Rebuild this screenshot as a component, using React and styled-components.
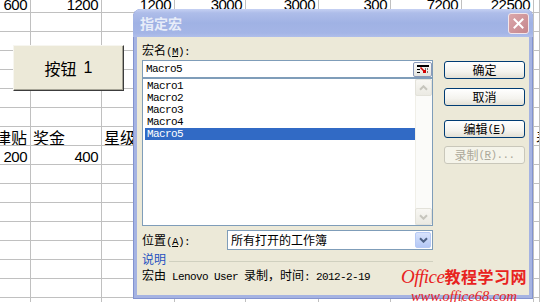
import React from "react";
import styled, { createGlobalStyle, css } from "styled-components";

const CJK = `"Noto Sans CJK SC", "Noto Sans", sans-serif`;
const MONO = `"Liberation Mono", "DejaVu Sans Mono", monospace`;

const GlobalStyle = createGlobalStyle`
  html, body { margin: 0; padding: 0; background: #ffffff; }
  body { font-family: ${CJK}; }
`;

const Screen = styled.div`
  position: relative;
  width: 540px;
  height: 302px;
  overflow: hidden;
  background: #fff;
`;

/* ---------- spreadsheet ---------- */
const Sheet = styled.div`
  display: grid;
  grid-template-columns: 31px 71px 73px 71px 73px 72px 71px 72px 1fr;
  grid-template-rows: 13px;
  grid-auto-rows: 19px;
  font-family: ${CJK};
  font-size: 16px;
  color: #000;
`;

const Cell = styled.div`
  box-sizing: border-box;
  min-width: 0;
  border-right: 1px solid #c0c0c0;
  border-bottom: 1px solid #c0c0c0;
  display: flex;
  align-items: flex-end;
  justify-content: ${(p) => (p.$right ? "flex-end" : "flex-start")};
  padding: 0 3px 0 2px;
  overflow: hidden;
  white-space: nowrap;
  line-height: 1;
`;

const Num = styled.span`
  font-family: "Liberation Sans", Arial, sans-serif;
  font-size: 15px;
  letter-spacing: -0.5px;
`;

const FormButton = styled.div`
  position: absolute;
  left: 13px;
  top: 45px;
  width: 111px;
  height: 46px;
  box-sizing: border-box;
  background: #ece9d8;
  border-top: 1px solid #f7f6f0;
  border-left: 1px solid #f7f6f0;
  border-right: 1px solid #3c3c3c;
  border-bottom: 1px solid #3c3c3c;
  box-shadow: inset -1px -1px 0 #a7a597;
  display: flex;
  align-items: center;
  justify-content: center;
  font: 16px ${CJK};
  color: #000;
`;

const FormNum = styled.span`
  margin-left: 7px;
  font-family: "Liberation Sans", Arial, sans-serif;
  font-size: 16px;
`;

/* ---------- dialog ---------- */
const Dialog = styled.div`
  position: absolute;
  left: 133px;
  top: 9px;
  width: 400px;
  height: 290px;
  box-sizing: border-box;
  display: flex;
  flex-direction: column;
  padding: 0 4px 4px;
  background: #a5b3e2;
  border-radius: 8px 8px 0 0;
  box-shadow: inset 0 0 0 1px #8393cf;
`;

const TitleBar = styled.div`
  height: 28px;
  margin: 0 -4px;
  padding: 0 4px 0 7px;
  display: flex;
  align-items: center;
  justify-content: space-between;
  border-radius: 8px 8px 0 0;
  background: linear-gradient(
    to bottom,
    #c6d1f3 0%,
    #aebde9 14%,
    #a0b2e4 50%,
    #a4b5e6 86%,
    #b0bfea 100%
  );
`;

const Title = styled.span`
  font: bold 14px ${CJK};
  color: #e8edf9;
`;

const CloseBtn = styled.div`
  width: 21px;
  height: 21px;
  box-sizing: border-box;
  border: 1px solid #f3e6ea;
  border-radius: 3px;
  background: linear-gradient(135deg, #dba7ab, #c5868c);
  display: flex;
  align-items: center;
  justify-content: center;
`;

const Client = styled.div`
  flex: 1;
  background: #ece9d8;
  display: grid;
  grid-template-columns: 291px 81px;
  column-gap: 11px;
  padding: 6px 4px 0 5px;
  align-items: start;
`;

const LeftCol = styled.div`
  display: flex;
  flex-direction: column;
`;

const Label = styled.div`
  font: 12px/14px ${CJK};
  color: #000;
  height: 14px;
  white-space: nowrap;
`;

const Lat = styled.span`
  font-family: ${MONO};
  font-size: 11px;
  letter-spacing: -0.6px;
`;

const Acc = styled.span`
  text-decoration: underline;
`;

const NameInput = styled.div`
  margin-top: 3px;
  height: 18px;
  box-sizing: border-box;
  border: 1px solid #7f9db9;
  background: #fff;
  display: flex;
  align-items: center;
  justify-content: space-between;
  padding: 0 0 0 3px;
  font-family: ${MONO};
  font-size: 11px;
  letter-spacing: -0.6px;
`;

const RefBtn = styled.div`
  width: 19px;
  height: 15px;
  box-sizing: border-box;
  border: 1px solid #8a99b8;
  border-radius: 2px;
  background: linear-gradient(#fbfbfa, #e4e4de);
  display: flex;
  align-items: center;
  justify-content: center;
`;

const ListBox = styled.div`
  height: 148px;
  box-sizing: border-box;
  border: 1px solid #7f9db9;
  background: #fff;
  display: flex;
`;

const Items = styled.div`
  flex: 1;
  padding: 1px 0 0 2px;
`;

const Item = styled.div`
  height: 12px;
  line-height: 12px;
  padding-left: 2px;
  font-family: ${MONO};
  font-size: 11px;
  letter-spacing: -0.6px;
  color: #000;
  ${(p) =>
    p.$selected &&
    css`
      background: #316ac5;
      color: #fff;
    `}
`;

const ScrollBar = styled.div`
  width: 17px;
  display: flex;
  flex-direction: column;
  justify-content: space-between;
  background: #fbfbf9;
  box-shadow: inset 1px 0 0 #f0efe8;
`;

const ScrollBtn = styled.div`
  width: 17px;
  height: 17px;
  box-sizing: border-box;
  border: 1px solid #e3e2da;
  border-radius: 2px;
  background: linear-gradient(#f8f7f3, #ebeae3);
  display: flex;
  align-items: center;
  justify-content: center;
`;

const ComboRow = styled.div`
  margin-top: 4px;
  display: grid;
  grid-template-columns: 85px 1fr;
  align-items: center;
`;

const Combo = styled.div`
  height: 20px;
  box-sizing: border-box;
  border: 1px solid #7f9db9;
  background: #fff;
  display: flex;
  align-items: center;
  justify-content: space-between;
  padding: 0 1px 0 3px;
  font: 12px/14px ${CJK};
  color: #000;
`;

const DropBtn = styled.div`
  width: 16px;
  height: 16px;
  box-sizing: border-box;
  border: 1px solid #b7caf5;
  border-radius: 2px;
  background: linear-gradient(#d8e3fc, #b4c8f6);
  display: flex;
  align-items: center;
  justify-content: center;
`;

const GroupHead = styled.div`
  margin-top: 2px;
  display: flex;
  align-items: flex-start;
  gap: 3px;
  font: 12px/14px ${CJK};
  color: #1e50c0;
  &::after {
    content: "";
    flex: 1;
    height: 1px;
    margin-top: 9px;
    background: #d0d0bf;
  }
`;

const Desc = styled.div`
  margin-top: 2px;
  font: 12px/14px ${CJK};
  color: #000;
  white-space: nowrap;
`;

const RightCol = styled.div`
  display: flex;
  flex-direction: column;
  padding-top: 18px;
`;

const Btn = styled.div`
  margin-top: ${(p) => p.$gap || 0}px;
  width: 81px;
  height: 18px;
  box-sizing: border-box;
  border: 1px solid #003c74;
  border-radius: 3px;
  background: linear-gradient(#ffffff 0%, #f4f3ee 60%, #e3e0d5 100%);
  display: flex;
  align-items: center;
  justify-content: center;
  font: 12px/14px ${CJK};
  color: #000;
  white-space: nowrap;
  ${(p) =>
    p.$disabled &&
    css`
      border-color: #c9c7ba;
      background: #f5f4ea;
      color: #aca899;
    `}
`;

const Watermark = styled.div`
  position: absolute;
  left: 268px;
  top: 255px;
  display: flex;
  flex-direction: column;
  align-items: center;
  color: #e8231e;
  pointer-events: none;
`;

const WmTop = styled.div`
  display: flex;
  align-items: baseline;
  white-space: nowrap;
  line-height: 1;
`;

const WmOffice = styled.span`
  font: italic 19px "Liberation Serif", serif;
  letter-spacing: -0.5px;
`;

const WmCn = styled.span`
  font: bold 16px ${CJK};
  letter-spacing: 0.5px;
`;

const WmUrl = styled.div`
  font: italic 14.5px/1 "Liberation Serif", serif;
  margin-top: 1px;
  white-space: nowrap;
`;

/* ---------- data ---------- */
const rows = [
  ["600", "1200", "1200", "3000", "3000", "300", "7200", "22500", ""],
  [],
  [],
  [],
  [],
  [],
  [],
  ["津贴", "奖金", "星级", "", "", "", "", "", "表"],
  ["200", "400"],
  [],
  [],
  [],
  [],
  [],
  [],
  [],
  [],
];

const macros = ["Macro1", "Macro2", "Macro3", "Macro4", "Macro5"];

const Chevron = ({ dir = "down", color, w = 9 }) => (
  <svg width={w} height="6" viewBox="0 0 9 6">
    <path
      d={dir === "down" ? "M1 1.2 L4.5 4.7 L8 1.2" : "M1 4.8 L4.5 1.3 L8 4.8"}
      stroke={color}
      strokeWidth="2"
      fill="none"
    />
  </svg>
);

export default function App() {
  return (
    <Screen>
      <GlobalStyle />
      <Sheet>
        {rows.map((row, r) =>
          Array.from({ length: 9 }).map((_, c) => {
            const v = row[c] || "";
            const isNum = /^\d+$/.test(v);
            return (
              <Cell key={`${r}-${c}`} $right={isNum || (c === 0 && v)}>
                {isNum ? <Num>{v}</Num> : v}
              </Cell>
            );
          })
        )}
      </Sheet>

      <FormButton>
        按钮<FormNum>1</FormNum>
      </FormButton>

      <Dialog>
        <TitleBar>
          <Title>指定宏</Title>
          <CloseBtn>
            <svg width="11" height="11" viewBox="0 0 11 11">
              <path
                d="M1.5 1.5 L9.5 9.5 M9.5 1.5 L1.5 9.5"
                stroke="#fff"
                strokeWidth="2"
                strokeLinecap="square"
              />
            </svg>
          </CloseBtn>
        </TitleBar>

        <Client>
          <LeftCol>
            <Label>
              宏名<Lat>
                (<Acc>M</Acc>):
              </Lat>
            </Label>
            <NameInput>
              Macro5
              <RefBtn>
                <svg width="14" height="10" viewBox="0 0 14 10">
                  <rect x="1" y="1" width="12" height="2" fill="#000" />
                  <rect x="1" y="5" width="3" height="1" fill="#000" />
                  <rect x="1" y="8" width="3" height="1" fill="#000" />
                  <path d="M9 5 H13 M11 8 H13" stroke="#000" strokeWidth="1" strokeDasharray="1 1" />
                  <path d="M4.5 3.5 L9 8" stroke="#d40000" strokeWidth="1.6" />
                  <rect x="7" y="6" width="3" height="3" fill="#d40000" />
                </svg>
              </RefBtn>
            </NameInput>
            <ListBox>
              <Items>
                {macros.map((m) => (
                  <Item key={m} $selected={m === "Macro5"}>
                    {m}
                  </Item>
                ))}
              </Items>
              <ScrollBar>
                <ScrollBtn>
                  <Chevron dir="up" color="#c6c5bd" />
                </ScrollBtn>
                <ScrollBtn>
                  <Chevron dir="down" color="#c6c5bd" />
                </ScrollBtn>
              </ScrollBar>
            </ListBox>

            <ComboRow>
              <Label>
                位置<Lat>
                  (<Acc>A</Acc>):
                </Lat>
              </Label>
              <Combo>
                所有打开的工作簿
                <DropBtn>
                  <Chevron dir="down" color="#4d6185" />
                </DropBtn>
              </Combo>
            </ComboRow>

            <GroupHead>说明</GroupHead>
            <Desc>
              宏由<Lat> Lenovo User </Lat>录制，时间<Lat>: 2012-2-19</Lat>
            </Desc>
          </LeftCol>

          <RightCol>
            <Btn>确定</Btn>
            <Btn $gap={9}>取消</Btn>
            <Btn $gap={14}>
              编辑<Lat>
                (<Acc>E</Acc>)
              </Lat>
            </Btn>
            <Btn $gap={8} $disabled>
              录制<Lat>
                (<Acc>R</Acc>)...
              </Lat>
            </Btn>
          </RightCol>
        </Client>

        <Watermark>
          <WmTop>
            <WmOffice>Office</WmOffice>
            <WmCn>教程学习网</WmCn>
          </WmTop>
          <WmUrl>www.office68.com</WmUrl>
        </Watermark>
      </Dialog>
    </Screen>
  );
}
